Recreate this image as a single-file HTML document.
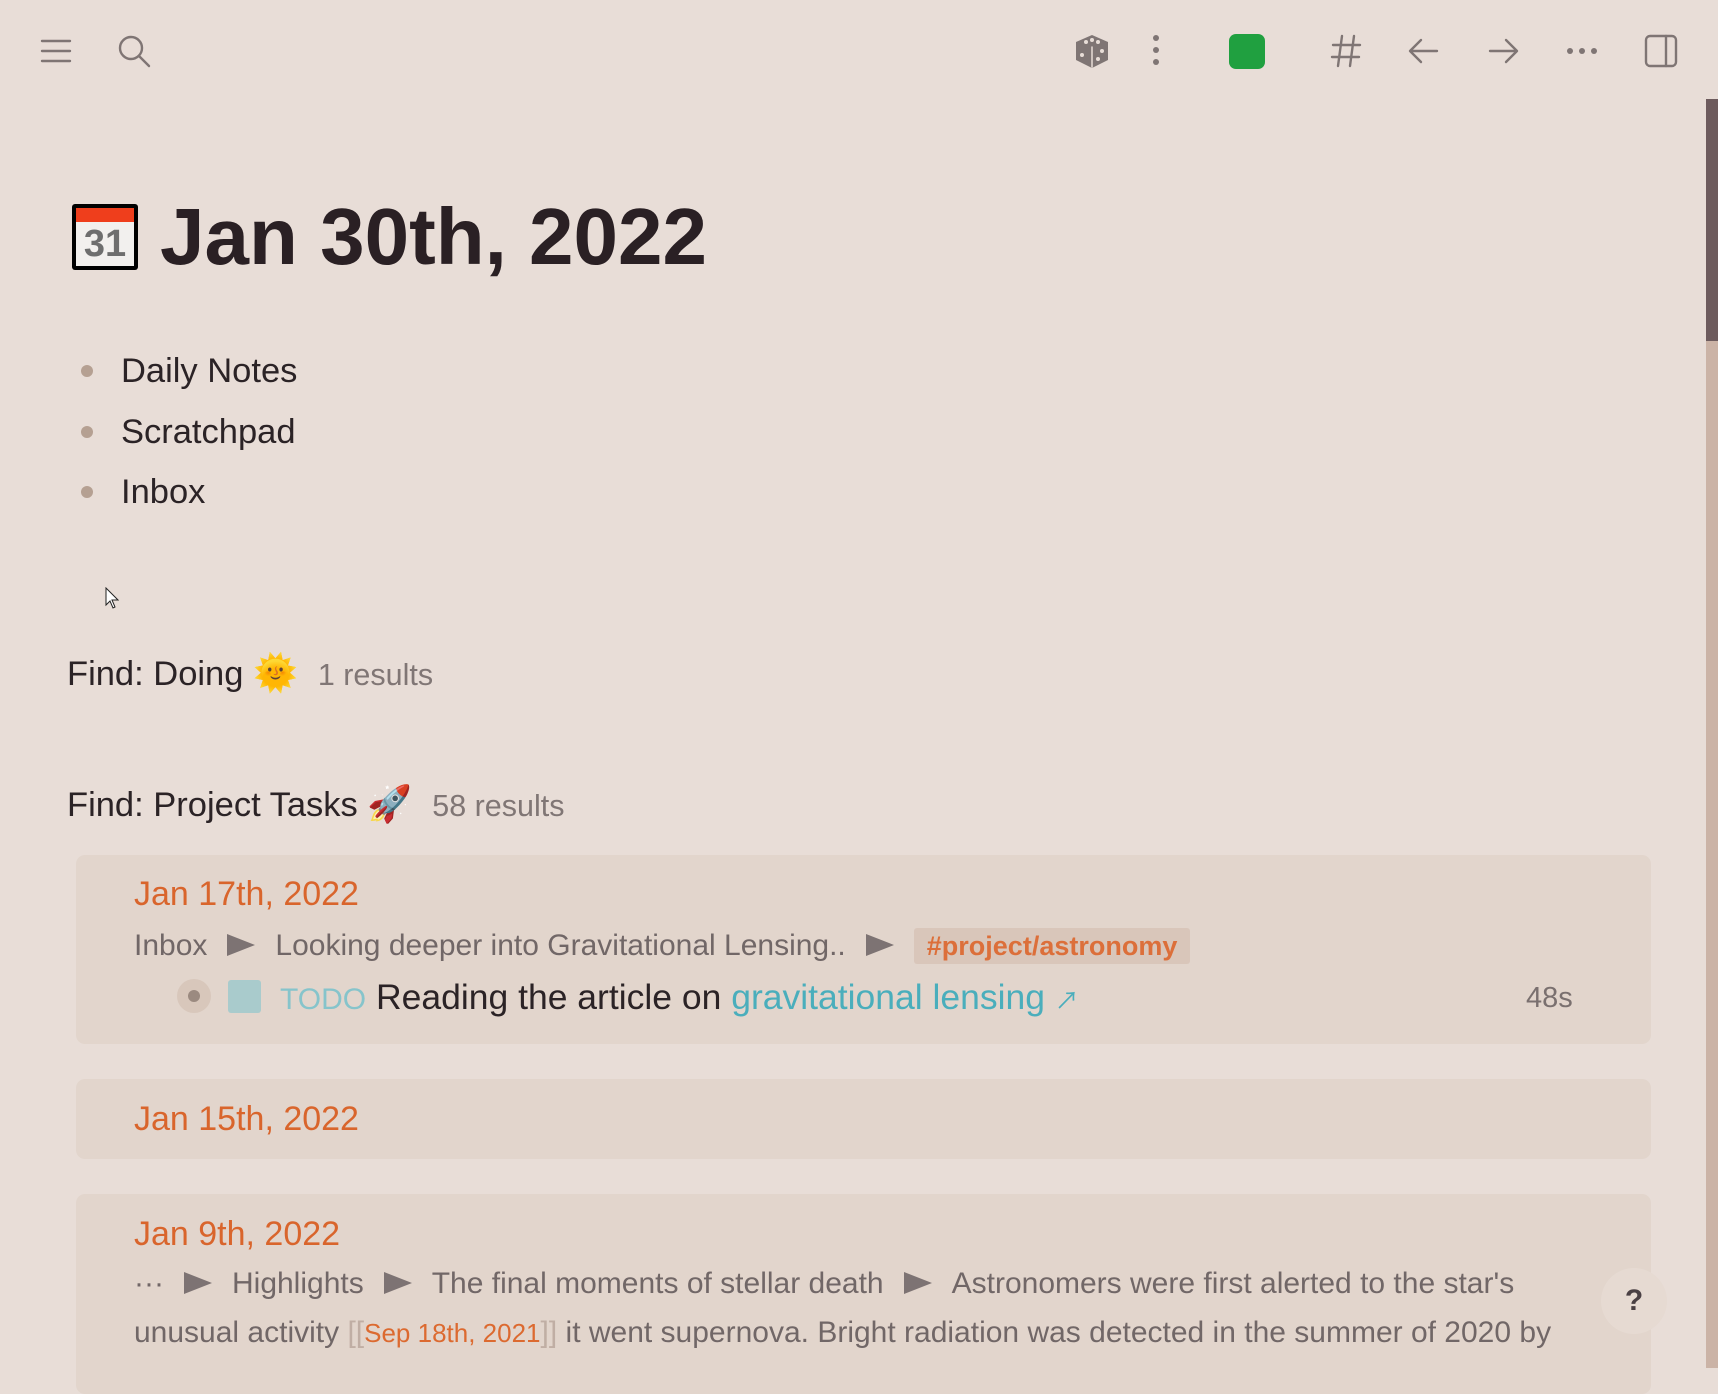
<!DOCTYPE html>
<html><head><meta charset="utf-8"><style>
*{margin:0;padding:0;box-sizing:border-box}
body{width:1718px;height:1368px;overflow:hidden;background:#e8ddd7;font-family:"Liberation Sans","Noto Sans CJK JP",sans-serif;position:relative;color:#2b2326}
.abs{position:absolute}
.ic{position:absolute;top:33px;width:36px;height:36px}
.ic svg{width:36px;height:36px;stroke:#7f7574;fill:none;stroke-width:2.4;stroke-linecap:round;stroke-linejoin:round}
.bul{position:absolute;left:81px;width:12px;height:12px;border-radius:50%;background:#b5a092}
.li{position:absolute;left:121px;font-size:34.5px;color:#2b2326;line-height:40px}
.find{position:absolute;left:67px;font-size:34.5px;line-height:40px;color:#2b2326}
.find small{font-size:30.5px;color:#807675;margin-left:20px}
.card{position:absolute;left:76px;width:1575px;background:#e2d5cc;border-radius:9px}
.date{position:absolute;left:58px;font-size:34px;color:#d9652c;line-height:40px}
.crumb{position:absolute;left:58px;font-size:30px;color:#716767;line-height:36px;white-space:nowrap}
.arr{display:inline-block;width:0;height:0;border-top:11px solid transparent;border-bottom:11px solid transparent;border-left:28px solid #7d7373;margin:0 20px;vertical-align:-1px}
</style></head><body>

<div class="ic" style="left:38px"><svg viewBox="0 0 36 36"><path d="M4 8h28M4 18h28M4 28h28"/></svg></div>
<div class="ic" style="left:116px"><svg viewBox="0 0 36 36"><circle cx="15" cy="15" r="11"/><path d="M23 23l10 10"/></svg></div>
<div class="ic" style="left:1074px"><svg viewBox="0 0 36 36" style="fill:#7f7574;stroke:none"><path d="M18 2l16 7v18l-16 8-16-8V9z"/><circle cx="12" cy="9" r="2" fill="#e8ddd7"/><circle cx="18" cy="7" r="2" fill="#e8ddd7"/><circle cx="24" cy="9" r="2" fill="#e8ddd7"/><path d="M18 14v20" stroke="#e8ddd7" stroke-width="1.5"/><circle cx="8" cy="22" r="2" fill="#e8ddd7"/><circle cx="28" cy="18" r="2" fill="#e8ddd7"/><circle cx="24" cy="26" r="2" fill="#e8ddd7"/></svg></div>
<div class="ic" style="left:1138px"><svg viewBox="0 0 36 36" style="fill:#7f7574;stroke:none"><circle cx="18" cy="5" r="3"/><circle cx="18" cy="17" r="3"/><circle cx="18" cy="29" r="3"/></svg></div>
<div class="abs" style="left:1229px;top:34px;width:36px;height:35px;background:#20a040;border-radius:7px"></div>
<div class="ic" style="left:1328px"><svg viewBox="0 0 36 36"><path d="M14 3l-4 30M26 3l-4 30M5 12h27M4 24h27"/></svg></div>
<div class="ic" style="left:1406px"><svg viewBox="0 0 36 36"><path d="M31 18H5M15 7L4 18l11 11"/></svg></div>
<div class="ic" style="left:1485px"><svg viewBox="0 0 36 36"><path d="M5 18h26M21 7l11 11-11 11"/></svg></div>
<div class="ic" style="left:1564px"><svg viewBox="0 0 36 36" style="fill:#7f7574;stroke:none"><circle cx="6" cy="18" r="3"/><circle cx="18" cy="18" r="3"/><circle cx="30" cy="18" r="3"/></svg></div>
<div class="ic" style="left:1643px"><svg viewBox="0 0 36 36"><rect x="3" y="3" width="30" height="30" rx="4"/><path d="M23 3v30"/></svg></div>

<div class="abs" style="left:1706px;top:99px;width:12px;height:1269px;background:#cbb3a6"></div>
<div class="abs" style="left:1706px;top:99px;width:12px;height:242px;background:#6d5b5d"></div>

<div class="abs" style="left:72px;top:204px;width:66px;height:66px;background:#000;border-radius:3px"></div>
<div class="abs" style="left:76px;top:208px;width:58px;height:14px;background:#ef3e1c"></div>
<div class="abs" style="left:76px;top:222px;width:58px;height:44px;background:#f2f0ee;font-size:38px;font-weight:bold;color:#6e6e6e;text-align:center;line-height:44px">31</div>
<div class="abs" style="left:160px;top:192px;font-size:80px;font-weight:bold;color:#2a2024;line-height:90px">Jan 30th, 2022</div>

<div class="bul" style="top:365px"></div><div class="li" style="top:351px">Daily Notes</div>
<div class="bul" style="top:426px"></div><div class="li" style="top:412px">Scratchpad</div>
<div class="bul" style="top:486px"></div><div class="li" style="top:472px">Inbox</div>

<svg class="abs" style="left:105px;top:587px" width="14" height="22" viewBox="0 0 14 22"><path d="M1 1v17l4-4 3 7 2-1-3-7h6z" fill="#fff" stroke="#222" stroke-width="1"/></svg>

<div class="find" style="top:653px">Find: Doing <span style="font-size:36px">🌞</span><small>1 results</small></div>
<div class="find" style="top:784px">Find: Project Tasks <span style="font-size:36px">🚀</span><small>58 results</small></div>

<div class="card" style="top:855px;height:189px">
 <div class="date" style="top:19px">Jan 17th, 2022</div>
 <div class="crumb" style="top:73px">Inbox<span class="arr"></span>Looking deeper into Gravitational Lensing..<span class="arr"></span><span style="background:#d9c6ba;color:#dc6f3a;font-weight:bold;padding:3px 13px;border-radius:3px;font-size:27px">#project/astronomy</span></div>
 <div class="abs" style="left:101px;top:124px;width:34px;height:34px;border-radius:50%;background:#d8c7bb"></div>
 <div class="abs" style="left:112px;top:135px;width:12px;height:12px;border-radius:50%;background:#9b8a80"></div>
 <div class="abs" style="left:152px;top:125px;width:33px;height:33px;border-radius:3px;background:#a9cbcc"></div>
 <div class="abs" style="left:204px;top:122px;font-size:35.5px;line-height:40px;white-space:nowrap"><span style="color:#86c4cb;font-size:30px">TODO</span> Reading the article on <span style="color:#4aaebc">gravitational lensing <span style="font-size:24px">↗</span></span></div>
 <div class="abs" style="left:1450px;top:127px;font-size:29px;color:#7a706f">48s</div>
</div>

<div class="card" style="top:1079px;height:80px">
 <div class="date" style="top:20px">Jan 15th, 2022</div>
</div>

<div class="card" style="top:1194px;height:200px">
 <div class="date" style="top:20px">Jan 9th, 2022</div>
 <div class="crumb" style="top:72px">···<span class="arr"></span>Highlights<span class="arr"></span>The final moments of stellar death<span class="arr"></span>Astronomers were first alerted to the star's</div>
 <div class="crumb" style="top:121px">unusual activity <span style="color:#c0aea4">[[</span><span style="color:#dc6a30;font-size:26px">Sep 18th, 2021</span><span style="color:#c0aea4">]]</span> it went supernova. Bright radiation was detected in the summer of 2020 by</div>
</div>

<div class="abs" style="left:1601px;top:1268px;width:66px;height:66px;border-radius:50%;background:#e6dad2;font-size:30px;font-weight:bold;color:#4a4044;text-align:center;line-height:66px">?</div>
</body></html>
